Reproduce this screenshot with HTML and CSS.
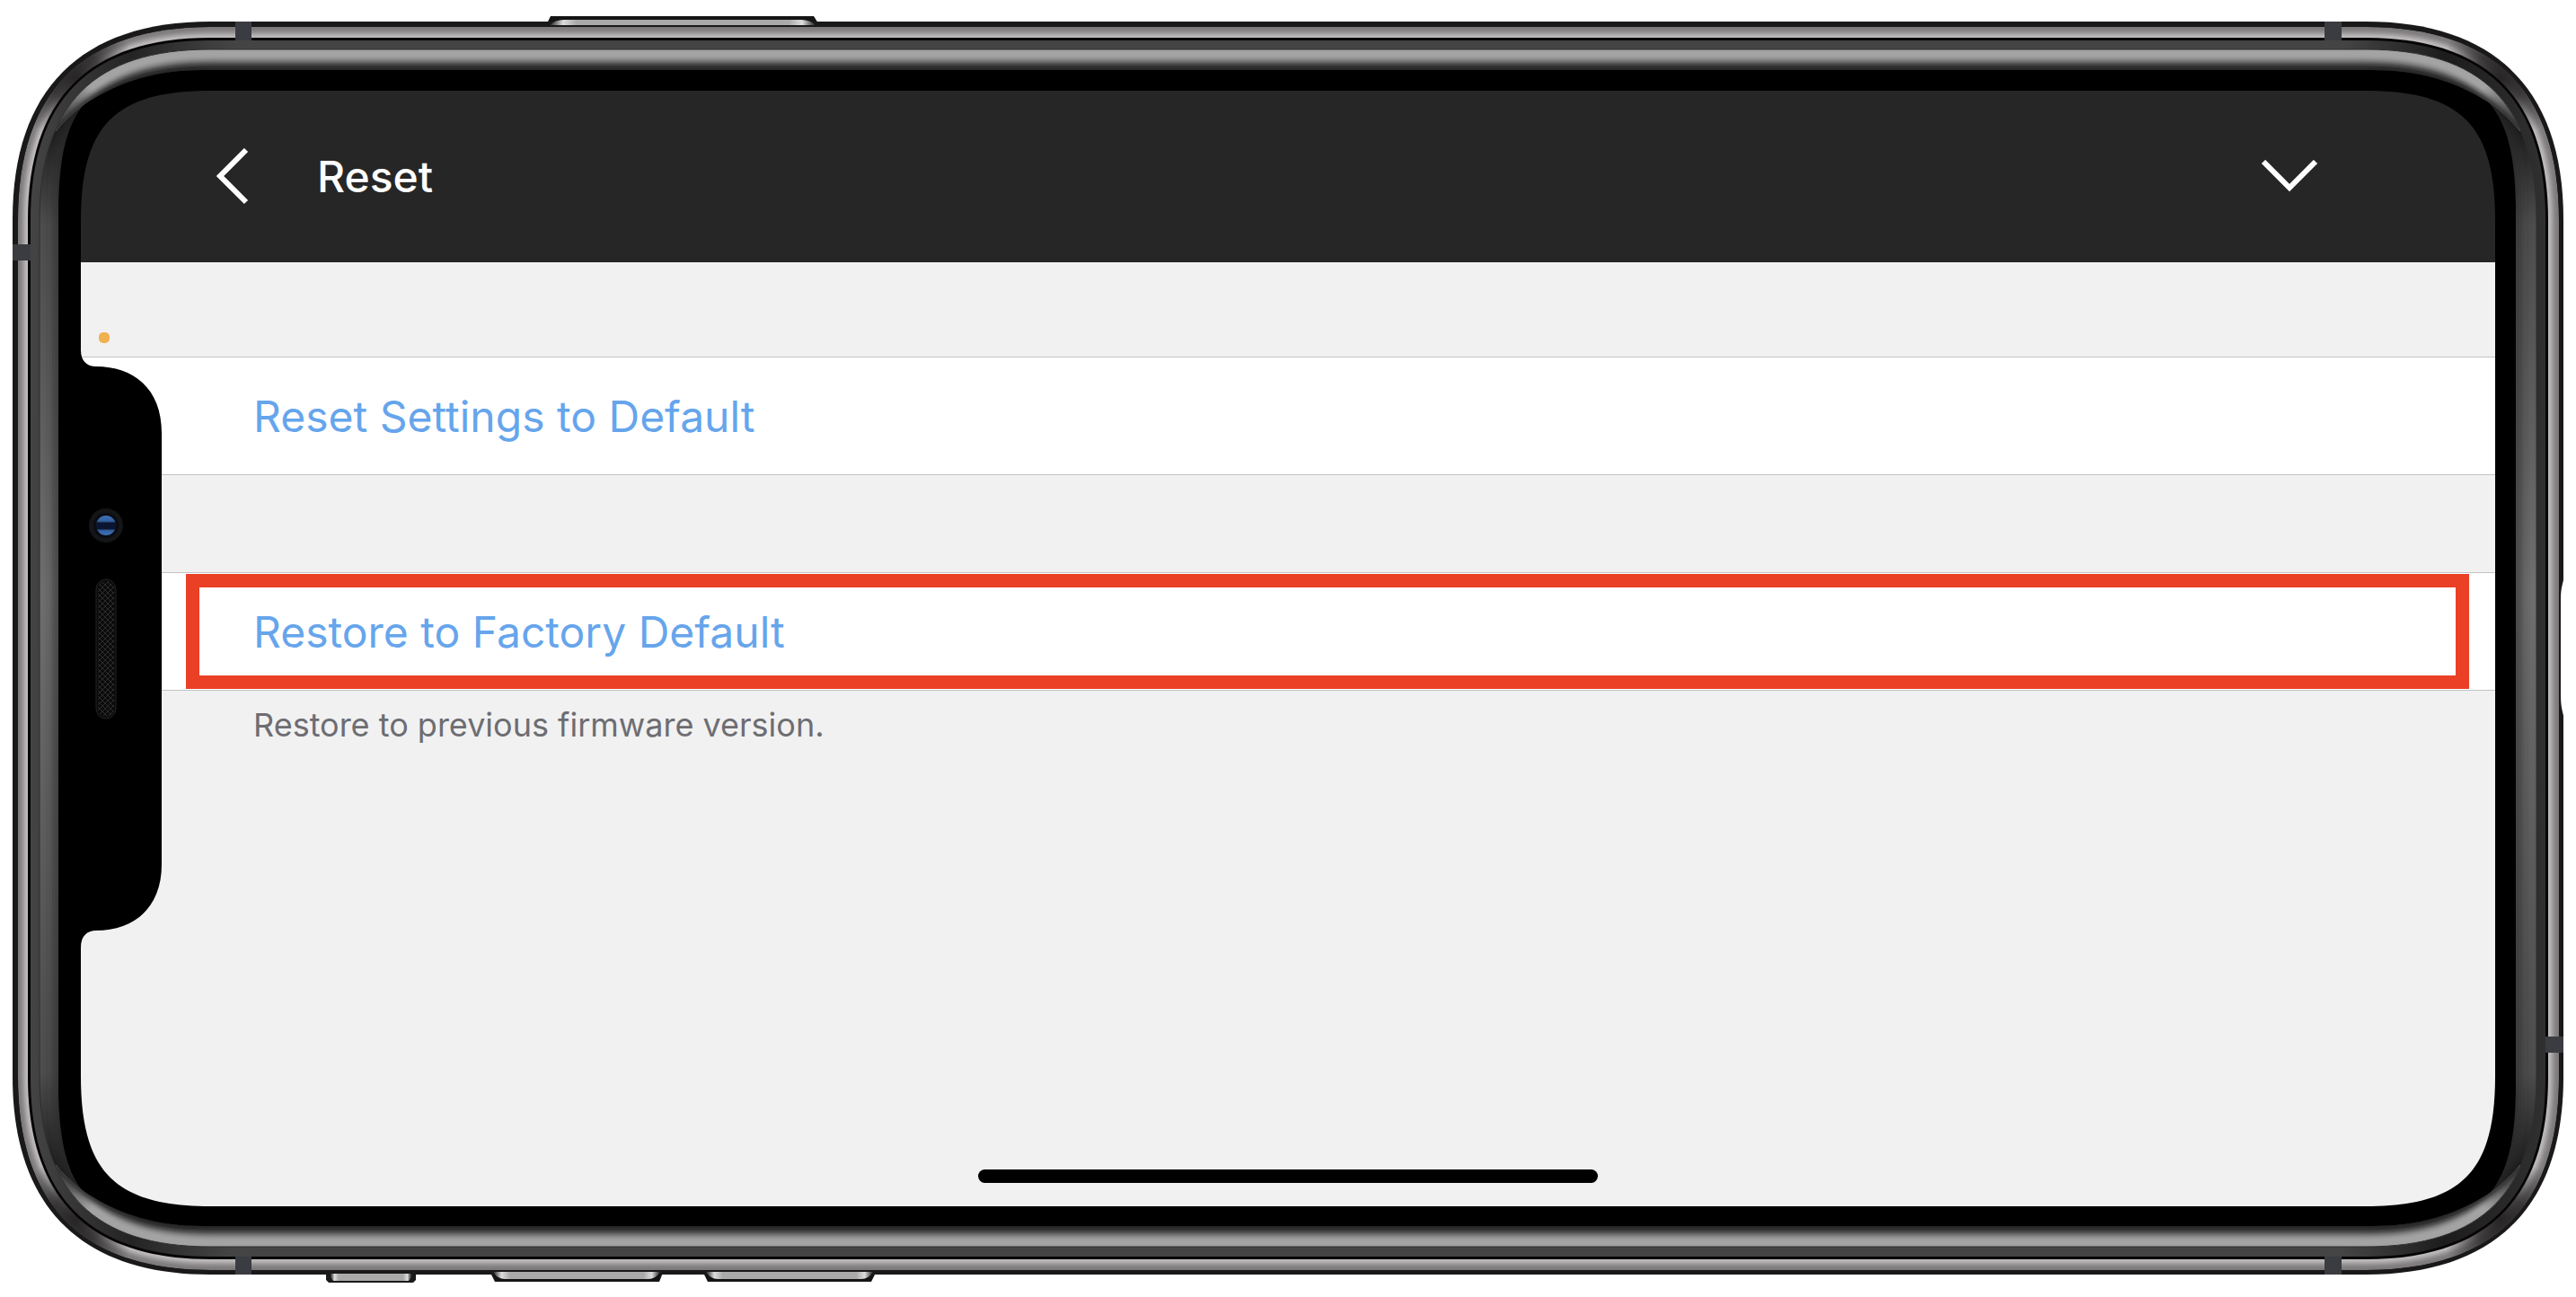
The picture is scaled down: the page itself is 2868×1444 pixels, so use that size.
FILE: index.html
```
<!DOCTYPE html>
<html lang="en">
<head>
  <meta charset="UTF-8">
  <meta name="viewport" content="width=device-width, initial-scale=1">
  <title>Reset</title>
  <link rel="stylesheet" href="styles.css">
</head>
<body>

  <div class="phone">
    <main class="screen">
      <header class="topbar">
        <button class="icon-button" type="button" aria-label="Back">
          <svg class="icon-back" viewBox="0 0 36 64"><path d="M33 2 L4 31 L33 60"/></svg>
        </button>
        <h1 class="title">Reset</h1>
        <button class="icon-button icon-button-end" type="button" aria-label="Close">
          <svg class="icon-down" viewBox="0 0 64 38"><path d="M3 2 L32 31 L61 2"/></svg>
        </button>
      </header>

      <div class="settings">
        <section class="group">
          <button class="row" type="button">Reset Settings to Default</button>
        </section>
        <section class="group">
          <button class="row highlighted" type="button">Restore to Factory Default</button>
          <p class="note">Restore to previous firmware version.</p>
        </section>
      </div>

      <div class="home-bar"></div>
    </main>

    <!-- phone body, drawn over the screen so the bezel rounds its corners -->
    <svg class="frame" viewBox="0 0 2868 1444" preserveAspectRatio="none" aria-hidden="true">
      <defs>
        <path id="outer" d="M14 244 C14 100 90 24 234 24 H2634 C2778 24 2854 100 2854 244 V1199 C2854 1343 2778 1419 2634 1419 H234 C90 1419 14 1343 14 1199Z"/>
        <path id="band" d="M20 245 C20 102 92 30 235 30 H2634 C2777 30 2849 102 2849 245 V1199 C2849 1342 2777 1414 2634 1414 H235 C92 1414 20 1342 20 1199Z"/>
        <path id="groove" d="M31 245 C31 110 99 42 234 42 H2634 C2769 42 2837 110 2837 245 V1199 C2837 1334 2769 1402 2634 1402 H234 C99 1402 31 1334 31 1199Z"/>
        <path id="rim" d="M34 245 C34 111 100 45 234 45 H2634 C2768 45 2834 111 2834 245 V1199 C2834 1333 2768 1399 2634 1399 H234 C100 1399 34 1333 34 1199Z"/>
        <path id="lip" d="M44 245 C44 116 105 55 234 55 H2634 C2763 55 2824 116 2824 245 V1198 C2824 1327 2763 1388 2634 1388 H234 C105 1388 44 1327 44 1198Z"/>
        <path id="bezel" d="M65 238 C65 113 100 78 225 78 H2641 C2766 78 2801 113 2801 238 V1206 C2801 1331 2766 1366 2641 1366 H225 C100 1366 65 1331 65 1206Z"/>
        <path id="shine" d="M62 146 C76 130 86 122 97 114 C135 90 175 78 225 78 H2641 C2693 78 2733 90 2771 114 C2782 122 2792 130 2806 146 L2824 40 H44Z"/>
        <path id="shine-edge" d="M62 146 C76 130 86 122 97 114 C135 90 175 78 225 78 H2641 C2693 78 2733 90 2771 114 C2782 122 2792 130 2806 146"/>

        <clipPath id="band-clip"><use href="#band"/></clipPath>
        <clipPath id="lip-clip"><use href="#lip"/></clipPath>
        <clipPath id="shine-clip"><use href="#shine"/></clipPath>
        <!-- everything except the display -->
        <mask id="display-hole" maskUnits="userSpaceOnUse" x="0" y="0" width="2868" height="1444">
          <rect width="2868" height="1444" fill="#fff"/>
          <path fill="#000" d="M90 246 C90 139 128 101 235 101 H2633 C2740 101 2778 139 2778 246 V1198 C2778 1305 2740 1343 2633 1343 H235 C128 1343 90 1305 90 1198Z"/>
        </mask>

        <filter id="soft" filterUnits="userSpaceOnUse" x="0" y="0" width="2868" height="1444"><feGaussianBlur stdDeviation="5"/></filter>
        <filter id="soft-small" filterUnits="userSpaceOnUse" x="0" y="0" width="2868" height="1444"><feGaussianBlur stdDeviation="3"/></filter>

        <linearGradient id="side" gradientUnits="userSpaceOnUse" x1="0" y1="100" x2="0" y2="1344">
          <stop offset="0" stop-color="#0a0a0a"/>
          <stop offset=".12" stop-color="#4c4c4c"/>
          <stop offset=".45" stop-color="#6e6e6e"/>
          <stop offset=".88" stop-color="#4c4c4c"/>
          <stop offset="1" stop-color="#0a0a0a"/>
        </linearGradient>
        <linearGradient id="rim-fill" gradientUnits="userSpaceOnUse" x1="34" y1="0" x2="2834" y2="0">
          <stop offset="0" stop-color="#444"/>
          <stop offset=".04" stop-color="#242424"/>
          <stop offset=".08" stop-color="#444"/>
          <stop offset=".92" stop-color="#444"/>
          <stop offset=".96" stop-color="#1c1c1c"/>
          <stop offset="1" stop-color="#303030"/>
        </linearGradient>
        <radialGradient id="shade">
          <stop offset="0" stop-color="#262425"/>
          <stop offset=".4" stop-color="#262425" stop-opacity=".8"/>
          <stop offset="1" stop-color="#262425" stop-opacity="0"/>
        </radialGradient>
        <linearGradient id="key" x1="0" y1="0" x2="1" y2="0">
          <stop offset="0" stop-color="#222"/>
          <stop offset=".05" stop-color="#ddd"/>
          <stop offset=".1" stop-color="#aaa"/>
          <stop offset=".9" stop-color="#aaa"/>
          <stop offset=".95" stop-color="#ddd"/>
          <stop offset="1" stop-color="#222"/>
        </linearGradient>
        <linearGradient id="lens" x1="0" y1="0" x2="0" y2="1">
          <stop offset="0" stop-color="#3f72b6"/>
          <stop offset=".28" stop-color="#34609f"/>
          <stop offset=".38" stop-color="#0b1430"/>
          <stop offset=".66" stop-color="#0b1430"/>
          <stop offset=".76" stop-color="#34609f"/>
          <stop offset="1" stop-color="#3f72b6"/>
        </linearGradient>
        <pattern id="mesh" width="6" height="6" patternUnits="userSpaceOnUse">
          <path d="M0 0 L3 3 L0 6 M6 0 L3 3 L6 6" fill="none" stroke="#2c2c2c" stroke-width="1"/>
        </pattern>

        <!-- bright reflection along a long edge -->
        <g id="reflection">
          <g clip-path="url(#shine-clip)">
            <rect x="40" y="50" width="2788" height="110" fill="#303030"/>
            <use href="#lip" fill="none" stroke="#a8a8a8" stroke-width="28" filter="url(#soft)"/>
            <use href="#lip" fill="none" stroke="#a2a2a2" stroke-width="12" filter="url(#soft-small)"/>
            <use href="#shine-edge" fill="none" stroke="#1c1c1c" stroke-width="6" filter="url(#soft-small)"/>
            <ellipse cx="62" cy="142" rx="60" ry="60" fill="url(#shade)" opacity=".7"/>
            <ellipse cx="2806" cy="142" rx="60" ry="60" fill="url(#shade)" opacity=".7"/>
          </g>
        </g>
      </defs>

      <!-- side keys -->
      <path fill="#141414" d="M609 26 L613 18 H906 L911 26Z"/>
      <path fill="#1a1a1a" d="M363 1417 H463 V1425 L460 1428 H366 L363 1425Z"/>
      <path fill="#141414" d="M546 1417 H738 L734 1427 H551Z"/>
      <path fill="#141414" d="M783 1417 H975 L970 1427 H788Z"/>

      <g mask="url(#display-hole)">
        <use href="#outer" fill="#1a191a"/>
        <g clip-path="url(#band-clip)">
          <use href="#band" fill="#7c797a"/>
          <use href="#groove" fill="none" stroke="#cbc7c8" stroke-width="9" filter="url(#soft-small)"/>
          <ellipse cx="84" cy="86" rx="72" ry="52" fill="url(#shade)" transform="rotate(-45 84 86)"/>
          <ellipse cx="2784" cy="86" rx="72" ry="52" fill="url(#shade)" transform="rotate(45 2784 86)"/>
          <ellipse cx="84" cy="1358" rx="72" ry="52" fill="url(#shade)" transform="rotate(45 84 1358)"/>
          <ellipse cx="2784" cy="1358" rx="72" ry="52" fill="url(#shade)" transform="rotate(-45 2784 1358)"/>
        </g>
        <use href="#groove" fill="#050505"/>
        <use href="#rim" fill="url(#rim-fill)"/>
        <use href="#lip" fill="url(#side)"/>
        <g clip-path="url(#lip-clip)">
          <use href="#bezel" fill="none" stroke="#2c2c2c" stroke-opacity=".6" stroke-width="14" filter="url(#soft)"/>
        </g>
        <use href="#bezel" fill="#000"/>
        <g clip-path="url(#lip-clip)">
          <use href="#reflection"/>
          <use href="#reflection" transform="matrix(1 0 0 -1 0 1443)"/>
        </g>
        <use href="#lip" fill="none" stroke="#2e2e2e" stroke-width="1"/>
      </g>

      <path fill="url(#key)" d="M612 28 Q618 22 628 22 H892 Q902 22 908 28Z"/>
      <path fill="url(#key)" d="M368 1418 H458 V1422 L455 1426 H371 L368 1422Z"/>
      <path fill="url(#key)" d="M549 1416 H735 Q730 1424 722 1424 H562 Q554 1424 549 1416Z"/>
      <path fill="url(#key)" d="M786 1416 H972 Q967 1424 959 1424 H799 Q791 1424 786 1416Z"/>

      <!-- antenna gaps -->
      <g fill="#3a3c41">
        <rect x="262" y="24" width="18" height="21"/>
        <rect x="2588" y="24" width="19" height="21"/>
        <rect x="262" y="1399" width="18" height="20"/>
        <rect x="2588" y="1399" width="19" height="20"/>
        <rect x="14" y="272" width="20" height="18"/>
        <rect x="2834" y="1154" width="20" height="18"/>
      </g>
      <path fill="#fff" d="M2855 642 C2852 654 2851 656 2851 670 V770 C2851 786 2852 788 2855 800Z"/>

      <!-- notch -->
      <path d="M89 390 H90 C90 402 97 408 107 408 C148 408 180 432 180 482 V962 C180 1012 148 1036 107 1036 C97 1036 90 1042 90 1055 H89Z"/>
      <circle cx="118" cy="585" r="19" fill="#131517"/>
      <circle cx="118" cy="585" r="14" fill="#0a0c12"/>
      <circle cx="118" cy="585" r="11" fill="url(#lens)"/>
      <rect x="107" y="645" width="22" height="155" rx="11" fill="#0b0b0b" stroke="#222"/>
      <rect x="109" y="647" width="18" height="151" rx="9" fill="url(#mesh)"/>

      <!-- microphone-in-use light -->
      <rect x="110" y="370" width="12" height="12" rx="5" fill="#f0b150"/>
    </svg>
  </div>

</body>
</html>
```
FILE: styles.css
```
* {
  box-sizing: border-box;
}

body {
  margin: 0;
  background: #fff;
  font-family: Inter, "Liberation Sans", sans-serif;
}

button {
  margin: 0;
  padding: 0;
  border: none;
  background: none;
  font: inherit;
  cursor: pointer;
}

.phone {
  position: relative;
  display: flex;
  min-height: 100vh;
  padding: 101px 90px;
}

.frame {
  position: absolute;
  inset: 0;
  width: 100%;
  height: 100%;
  pointer-events: none;
}

.screen {
  flex: 1;
  display: flex;
  flex-direction: column;
  background: #f1f1f1;
}

.topbar {
  display: flex;
  align-items: center;
  height: 191px;
  padding: 0 197px 0 151px;
  background: #262626;
  color: #fff;
}

.icon-button {
  display: flex;
}

.icon-button-end {
  margin-left: auto;
}

.icon-button svg {
  fill: none;
  stroke: #fff;
  stroke-width: 6;
}

.icon-back {
  width: 36px;
  height: 64px;
}

.icon-down {
  width: 64px;
  height: 38px;
}

.title {
  margin: 0 0 0 76px;
  font-size: 48px;
  font-weight: 500;
}

.settings {
  flex: 1;
  padding-top: 105px;
}

.group {
  margin-bottom: 108px;
}

.row {
  position: relative;
  display: block;
  width: 100%;
  height: 132px;
  padding-left: 192px;
  border-top: 1px solid #c3c3c5;
  border-bottom: 1px solid #c3c3c5;
  background: #fff;
  color: #66a5ec;
  font-size: 48px;
  text-align: left;
}

.highlighted::after {
  content: "";
  position: absolute;
  inset: 1px 29px 1px 117px;
  border: 15px solid #ea4026;
}

.note {
  margin: 16px 0 0 192px;
  color: #6d6d72;
  font-size: 36px;
  line-height: 44px;
}

.home-bar {
  align-self: center;
  width: 690px;
  height: 15px;
  margin-bottom: 26px;
  border-radius: 8px;
  background: #000;
}
```
